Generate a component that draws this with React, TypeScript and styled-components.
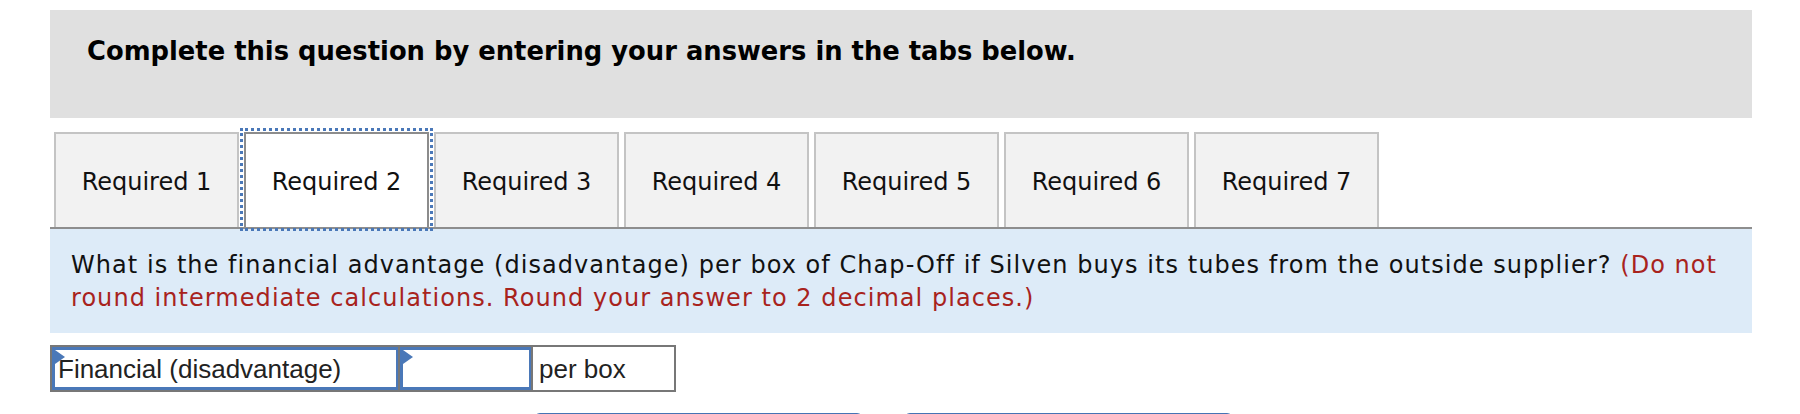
import * as React from 'react'
import styled, { createGlobalStyle, css } from 'styled-components'

const GlobalStyle = createGlobalStyle`
  html, body {
    margin: 0;
    padding: 0;
    background: #ffffff;
  }
  body {
    font-family: "DejaVu Sans", Verdana, sans-serif;
    color: #000;
  }
`

const Page = styled.div`
  width: 1702px;
  margin-left: 50px;
  padding-top: 10px;
`

const Header = styled.div`
  height: 108px;
  box-sizing: border-box;
  background: #e0e0e0;
  padding: 23px 37px 0;
  font-size: 25.8px;
  font-weight: bold;
  line-height: 36px;
`

const TabBar = styled.div`
  margin-top: 14px;
  display: flex;
  gap: 5px;
  padding-left: 4px;
  border-bottom: 2px solid #8e8e8e;
`

interface TabProps {
  active: boolean
}

const Tab = styled.div<TabProps>`
  width: 185px;
  height: 95px;
  box-sizing: border-box;
  border: 2px solid #c4c4c4;
  border-bottom: none;
  background: #f2f2f2;
  display: flex;
  align-items: center;
  justify-content: center;
  font-size: 24px;
  padding-top: 3px;
  color: #111;

  ${(props) =>
    props.active &&
    css`
      background: #ffffff;
      border-color: #8c8c8c;
      outline: 3px dotted #4a78b8;
      outline-offset: 1px;
      position: relative;
      z-index: 1;
    `}
`

const Panel = styled.div`
  background: #ddebf8;
  padding: 20px 24px 18px 21px;
  font-size: 24px;
  letter-spacing: 1.05px;
  line-height: 33px;
  color: #111;
`

const Note = styled.span`
  color: #a8231d;
`

const AnswerRow = styled.div`
  margin-top: 12px;
  display: inline-flex;
  gap: 2px;
  border: 2px solid #777777;
  background: #777777;
  height: 43px;
  font-family: "Liberation Sans", Arial, sans-serif;
  font-size: 26px;
  color: #222;
`

interface CellProps {
  width: number
  input?: boolean
}

const Cell = styled.div<CellProps>`
  position: relative;
  box-sizing: border-box;
  background: #ffffff;
  display: flex;
  align-items: center;
  padding-left: 6px;
  padding-top: 2px;

  ${(props) => css`
    width: ${props.width}px;
  `}

  ${(props) =>
    props.input &&
    css`
      border: 3px solid #4a78b8;
      border-right-width: 2px;
      padding-left: 3px;
    `}
`

const Marker = styled.span`
  position: absolute;
  left: 0;
  top: 0;
  width: 0;
  height: 0;
  border-top: 7px solid transparent;
  border-bottom: 7px solid transparent;
  border-left: 10px solid #4a78b8;
`

const Nav = styled.div`
  margin-top: 21px;
  padding-left: 484px;
  display: flex;
  gap: 41px;
`

const NavButton = styled.button`
  width: 329px;
  height: 44px;
  border: none;
  border-radius: 6px;
  background: #4573b4;
  color: #fff;
  font-family: "DejaVu Sans", Verdana, sans-serif;
  font-size: 20px;
`

const tabs = ['Required 1', 'Required 2', 'Required 3', 'Required 4', 'Required 5', 'Required 6', 'Required 7']

export default function App(): JSX.Element {
  return (
    <>
      <GlobalStyle />
      <Page>
        <Header>Complete this question by entering your answers in the tabs below.</Header>
        <TabBar>
          {tabs.map((label, i) => (
            <Tab key={label} active={i === 1}>
              {label}
            </Tab>
          ))}
        </TabBar>
        <Panel>
          What is the financial advantage (disadvantage) per box of Chap-Off if Silven buys its tubes from the outside supplier?{' '}
          <Note>(Do not round intermediate calculations. Round your answer to 2 decimal places.)</Note>
        </Panel>
        <AnswerRow>
          <Cell width={346} input>
            <Marker />
            Financial (disadvantage)
          </Cell>
          <Cell width={131} input>
            <Marker />
          </Cell>
          <Cell width={141}>per box</Cell>
        </AnswerRow>
        <Nav>
          <NavButton>&lt; Required 1</NavButton>
          <NavButton>Required 3 &gt;</NavButton>
        </Nav>
      </Page>
    </>
  )
}
